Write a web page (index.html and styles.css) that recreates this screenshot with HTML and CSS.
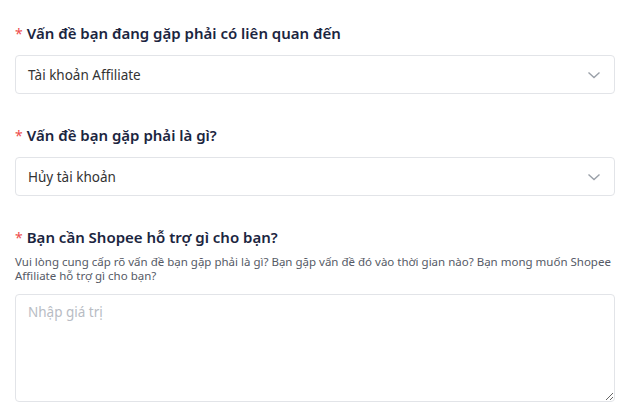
FILE: index.html
```html
<!DOCTYPE html>
<html lang="vi">
<head>
<meta charset="utf-8">
<link rel="stylesheet" href="styles.css">
</head>
<body>
<form class="form">
  <div class="field">
    <div class="label"><span class="req">*</span>Vấn đề bạn đang gặp phải có liên quan đến</div>
    <div class="select">
      <span class="value">Tài khoản Affiliate</span>
      <svg class="chev" width="14" height="8" viewBox="0 0 14 8"><path d="M1.5 1.5 L7 6.5 L12.5 1.5" fill="none" stroke="#9aa0a8" stroke-width="1.4"/></svg>
    </div>
  </div>
  <div class="field">
    <div class="label"><span class="req">*</span>Vấn đề bạn gặp phải là gì?</div>
    <div class="select">
      <span class="value">Hủy tài khoản</span>
      <svg class="chev" width="14" height="8" viewBox="0 0 14 8"><path d="M1.5 1.5 L7 6.5 L12.5 1.5" fill="none" stroke="#9aa0a8" stroke-width="1.4"/></svg>
    </div>
  </div>
  <div class="field">
    <div class="label"><span class="req">*</span>Bạn cần Shopee hỗ trợ gì cho bạn?</div>
    <div class="help">Vui lòng cung cấp rõ vấn đề bạn gặp phải là gì? Bạn gặp vấn đề đó vào thời gian nào? Bạn mong muốn Shopee Affiliate hỗ trợ gì cho bạn?</div>
    <textarea class="textarea" placeholder="Nhập giá trị"></textarea>
  </div>
</form>
</body>
</html>
```
FILE: styles.css
```css
html, body {
  margin: 0;
  padding: 0;
  background: #ffffff;
}
body {
  font-family: "Noto Sans", "Open Sans", sans-serif;
  color: #333333;
}
.form {
  padding: 21px 13px 0 15px;
}
.field {
  margin-bottom: 29px;
}
.label {
  font-size: 15px;
  font-weight: 600;
  line-height: 24px;
  color: #1b2540;
  margin-bottom: 9px;
  display: flex;
  align-items: baseline;
}
.req {
  color: #ee4d4d;
  font-weight: 400;
  font-size: 14px;
  margin-right: 4px;
}
.select {
  box-sizing: border-box;
  height: 39px;
  border: 1px solid #e2e4e8;
  border-radius: 4px;
  display: flex;
  align-items: center;
  justify-content: space-between;
  padding: 0 13px 0 12px;
}
.value {
  font-size: 13.5px;
  color: #333333;
}
.chev {
  display: block;
}
.help {
  font-size: 11.5px;
  line-height: 14px;
  color: #555a66;
  margin-top: -4px;
  margin-bottom: 11px;
}
.textarea {
  display: block;
  box-sizing: border-box;
  width: 100%;
  height: 108px;
  border: 1px solid #e2e4e8;
  border-radius: 4px;
  padding: 8px 12px;
  font-family: "Noto Sans", "Open Sans", sans-serif;
  font-size: 13.5px;
  color: #333333;
  resize: vertical;
  outline: none;
}
.textarea::placeholder {
  color: #b8bcc4;
}
```
